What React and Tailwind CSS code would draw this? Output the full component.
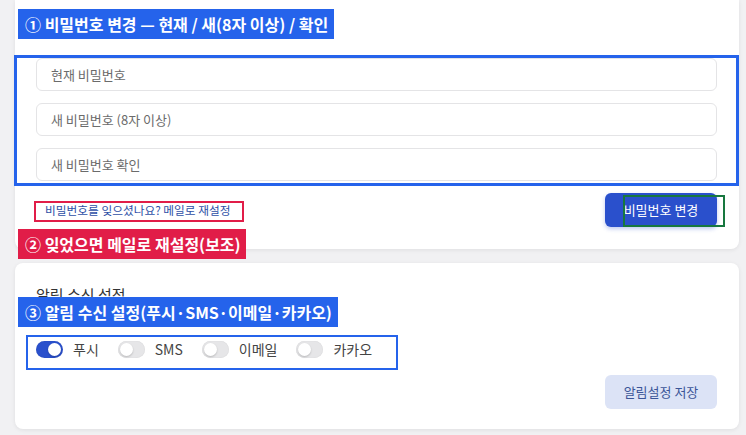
import React from "react";

const font = { fontFamily: '"Noto Sans CJK KR", "Noto Sans", sans-serif' };

function Toggle({ on }) {
  return (
    <div
      className={`relative w-[27px] h-[17px] rounded-full ${
        on ? "bg-[#2a50cc]" : "bg-[#e6e6e8]"
      } shadow-[inset_0_0_1px_rgba(0,0,0,0.15)]`}
    >
      <div
        className={`absolute top-[2px] w-[13px] h-[13px] rounded-full bg-white shadow-[0_1px_2px_rgba(0,0,0,0.2)] ${
          on ? "left-[12px]" : "left-[2px]"
        }`}
      />
    </div>
  );
}

function Input({ placeholder }) {
  return (
    <div className="h-[33px] rounded-[6px] border border-[#e4e4e6] bg-white flex items-center pl-[14px] text-[13px] text-[#6b6b6b]">
      {placeholder}
    </div>
  );
}

export default function App() {
  return (
    <div
      className="relative w-[746px] h-[435px] overflow-hidden bg-[#f1f1f3]"
      style={font}
    >
      <div className="pl-[15px] pr-[7px] flex flex-col gap-[14px]">
        {/* card 1 */}
        <div className="bg-white rounded-b-[8px] shadow-[0_1px_4px_rgba(0,0,0,0.08)] pt-[58px] pb-[22px] pl-[21px] pr-[22px]">
          <div className="flex flex-col gap-[12px]">
            <Input placeholder="현재 비밀번호" />
            <Input placeholder="새 비밀번호 (8자 이상)" />
            <Input placeholder="새 비밀번호 확인" />
          </div>
          <div className="mt-[12px] flex items-center justify-between">
            <a className="ml-[9px] mb-[1px] text-[11.7px] text-[#2e4fa6]">
              비밀번호를 잊으셨나요? 메일로 재설정
            </a>
            <button className="w-[112px] h-[34px] rounded-[6px] bg-[#2a50cc] text-white text-[13px] shadow-[0_2px_4px_rgba(42,80,204,0.3)]">
              비밀번호 변경
            </button>
          </div>
        </div>

        {/* card 2 */}
        <div className="bg-white rounded-[8px] shadow-[0_1px_4px_rgba(0,0,0,0.08)] pt-[21px] pb-[20px] pl-[21px] pr-[22px]">
          <div className="text-[15px] leading-[22px] text-[#333]">알림 수신 설정</div>
          <div className="mt-[35px] flex items-center gap-[19px] h-[17px]">
            {[
              ["푸시", true],
              ["SMS", false],
              ["이메일", false],
              ["카카오", false],
            ].map(([l, on]) => (
              <div key={l} className="flex items-center gap-[10px]">
                <Toggle on={on} />
                <span className="text-[14px] text-[#444]">{l}</span>
              </div>
            ))}
          </div>
          <div className="mt-[17px] flex justify-end">
            <button className="w-[112px] h-[34px] rounded-[6px] bg-[#dce3f6] text-[#3b5598] text-[13px]">
              알림설정 저장
            </button>
          </div>
        </div>
      </div>

      {/* annotation overlays */}
      <div className="absolute left-[18px] top-[9px] h-[30px] w-[316px] bg-[#2563eb] text-white font-bold text-[16px] flex items-center pl-[7px] whitespace-nowrap">
        ① 비밀번호 변경 — 현재 / 새(8자 이상) / 확인
      </div>
      <div className="absolute left-[14px] top-[55px] w-[725px] h-[131px] border-[3px] border-[#2563eb]" />
      <div className="absolute left-[34px] top-[201px] w-[210px] h-[21px] border-2 border-[#e11d48]" />
      <div className="absolute left-[623px] top-[195px] w-[102px] h-[32px] border-2 border-[#17773f]" />
      <div className="absolute left-[18px] top-[229px] h-[30px] w-[228px] bg-[#e11d48] text-white font-bold text-[16px] flex items-center pl-[7px] whitespace-nowrap">
        ② 잊었으면 메일로 재설정(보조)
      </div>
      <div className="absolute left-[18px] top-[297px] h-[30px] w-[320px] bg-[#2563eb] text-white font-bold text-[16px] flex items-center pl-[7px] whitespace-nowrap">
        ③ 알림 수신 설정(푸시·SMS·이메일·카카오)
      </div>
      <div className="absolute left-[26px] top-[335px] w-[372px] h-[35px] border-2 border-[#2563eb]" />
    </div>
  );
}
